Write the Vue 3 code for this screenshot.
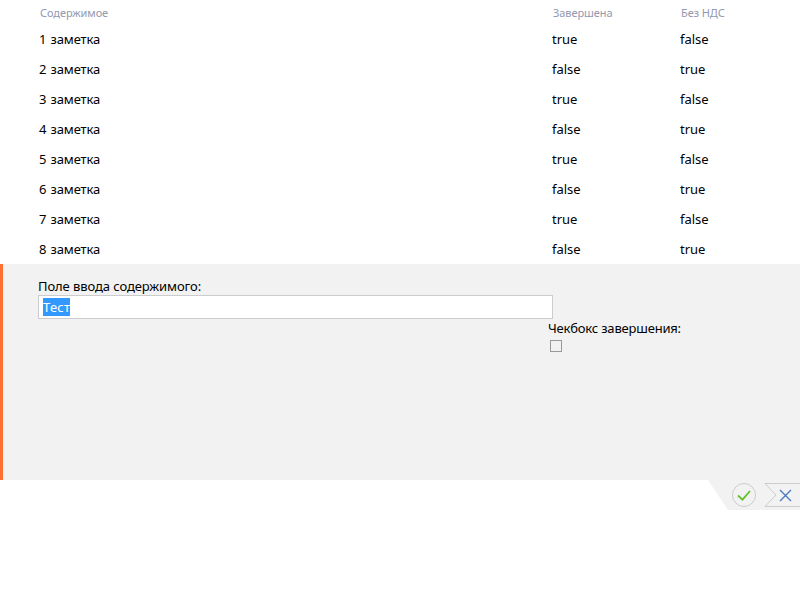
<script setup>
const rows = Array.from({ length: 8 }, (_, i) => ({
  id: i + 1,
  done: i % 2 === 0,
  noVat: i % 2 === 1,
}))
</script>

<template>
  <main class="page">
    <div class="row head">
      <span>Содержимое</span>
      <span>Завершена</span>
      <span>Без НДС</span>
    </div>
    <div v-for="row in rows" :key="row.id" class="row">
      <span class="note">{{ row.id }} заметка</span>
      <span>{{ row.done }}</span>
      <span>{{ row.noVat }}</span>
    </div>
    <section class="editor">
      <div class="label content-label">Поле ввода содержимого:</div>
      <div class="input"><span class="selected">Тест</span></div>
      <div class="check">
        <div class="label check-label">Чекбокс завершения:</div>
        <div class="box"></div>
      </div>
    </section>
    <div class="actions">
      <svg width="92" height="30" viewBox="0 0 92 30">
        <path d="M0 0H92V30H20Z" fill="#f2f2f2" />
        <circle cx="36" cy="15" r="11.5" fill="#f2f2f2" stroke="#ccc" />
        <path d="M30 15.5L34.5 19.7L42 11" fill="none" stroke="#62c02e" stroke-width="1.8" />
        <path d="M93 3.5H57L68 15L57 26.5H93" fill="none" stroke="#ccc" />
        <path d="M72 10L83 21M83 10L72 21" fill="none" stroke="#4a79c2" stroke-width="1.4" />
      </svg>
    </div>
  </main>
</template>

<style>
body {
  margin: 0;
  background: #fff;
}
</style>

<style scoped>
.page {
  width: 800px;
  height: 600px;
  overflow: hidden;
  font-family: "Noto Sans", "Open Sans", sans-serif;
  font-size: 13px;
  color: #000;
}
.row {
  display: grid;
  grid-template-columns: 513px 128px 1fr;
  height: 30px;
  padding-left: 39px;
  line-height: 30px;
  white-space: nowrap;
}
.row.head {
  height: 24px;
  padding-left: 40px;
  line-height: 26px;
  font-size: 11px;
  letter-spacing: -0.08px;
  color: #9299b0;
}
.note {
  letter-spacing: -0.16px;
  word-spacing: 1.1px;
}
.editor {
  box-sizing: border-box;
  height: 216px;
  padding: 13px 0 0 35px;
  border-left: 3px solid #ff7033;
  background: #f2f2f2;
}
.label {
  height: 18px;
  line-height: 18px;
  white-space: nowrap;
}
.content-label {
  letter-spacing: -0.09px;
}
.check-label {
  letter-spacing: -0.19px;
}
.input {
  box-sizing: border-box;
  display: flex;
  align-items: center;
  width: 515px;
  height: 24px;
  padding-left: 4px;
  border: 1px solid #ccc;
  background: #fff;
}
.selected {
  height: 18px;
  line-height: 18px;
  letter-spacing: 0.2px;
  background: #39f;
  color: #fff;
}
.check {
  margin-left: 510px;
}
.box {
  box-sizing: border-box;
  width: 12px;
  height: 12px;
  margin: 3px 0 0 2px;
  border: 1px solid #999;
}
.actions {
  display: flex;
  justify-content: flex-end;
}
.actions svg {
  display: block;
}
</style>
